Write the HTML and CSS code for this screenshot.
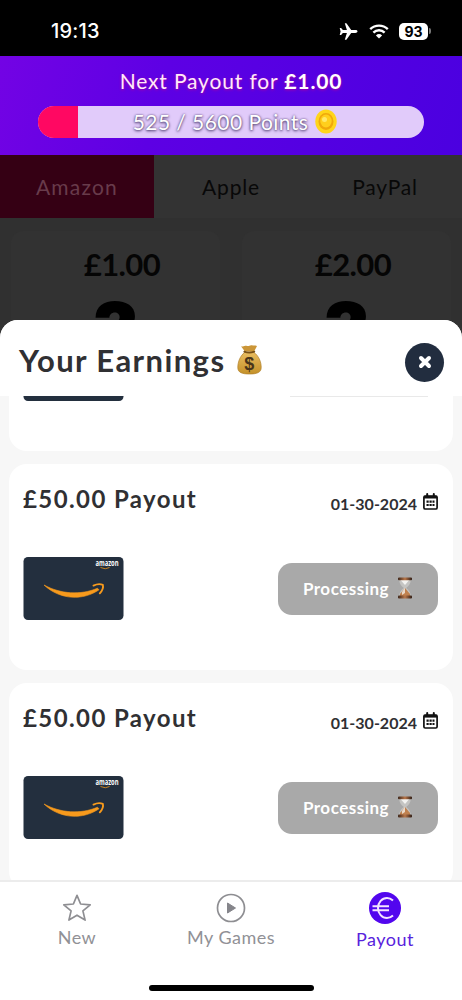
FILE: index.html
```html
<!DOCTYPE html>
<html lang="en">
<head>
<meta charset="utf-8">
<title>Your Earnings</title>
<link rel="stylesheet" href="styles.css">
</head>
<body>
<svg class="defs" aria-hidden="true">
  <defs>
    <linearGradient id="sand" x1="0" y1="0" x2="0" y2="1"><stop offset="0" stop-color="#e9bd62"/><stop offset="1" stop-color="#c49129"/></linearGradient>
    <linearGradient id="wood" x1="0" y1="0" x2="1" y2="0"><stop offset="0" stop-color="#3b2418"/><stop offset=".5" stop-color="#b9774a"/><stop offset="1" stop-color="#2e1b13"/></linearGradient>
    <symbol id="calendar" viewBox="0 0 15 17">
      <path d="M4.2 1v3M10.8 1v3" stroke="#111" stroke-width="2" stroke-linecap="round"/>
      <rect x=".9" y="3" width="13.2" height="13" rx="1.3" fill="#fff" stroke="#111" stroke-width="1.7"/>
      <path d="M1 4.2h13" stroke="#111" stroke-width="2.8"/>
      <path d="M3.5 8.7h8M3.5 12h8" stroke="#111" stroke-width="2.2" stroke-dasharray="2.2 .8"/>
    </symbol>
    <symbol id="hourglass" viewBox="0 0 16 22">
      <path d="M2.3 2.5h11.4c0 4.300-1.500 5.800-4.500 8.500 3 2.700 4.500 4.200 4.500 8.500H2.300c0-4.300 1.500-5.800 4.500-8.500-3-2.700-4.500-4.200-4.500-8.500z" fill="#c4c4c2"/>
      <path d="M3.500 3h8.800L8 8z" fill="#f3f3f1"/>
      <path d="M8 11 13 17v2.500H3V17z" fill="#c0814f"/>
      <path d="M8 10.500 5 15v3l3-2z" fill="#ead9c9"/>
      <rect x="1" y=".5" width="14" height="2.700" rx="1" fill="url(#wood)"/>
      <rect x="1" y="18.500" width="14" height="3" rx="1" fill="url(#wood)"/>
    </symbol>
    <symbol id="giftcard" viewBox="0 0 100 63">
      <rect width="100" height="63" rx="4.500" fill="#232f3e"/>
      <path d="M20.500 28C37 37 57 38.500 74 31.200l1.500 1.600C60 43.500 37 43.500 20.500 28z" fill="#f79a1c" stroke="#f79a1c" stroke-width=".6" stroke-linejoin="round"/>
      <path d="M70 28.600c3-1.500 7.300-1.600 9.300-.8.700 2.500-.8 6.200-3 8.500" fill="none" stroke="#f79a1c" stroke-width="1.900" stroke-linecap="round" stroke-linejoin="round"/>
      <text x="72" y="9" class="brand" textLength="23" lengthAdjust="spacingAndGlyphs">amazon</text>
      <path d="M77 10.500q5 2.500 9 0" fill="none" stroke="#c98522" stroke-width="1"/>
    </symbol>
  </defs>
</svg>

<header class="status">
  <span class="clock">19:13</span>
  <div class="signals">
    <svg width="19" height="17" viewBox="0 0 19 17"><path d="M18.500 8.500c0-.9-1-1.400-2.200-1.400h-4.100L7.600.6C7.400.3 7.100.2 6.800.2h-1l2.100 6.900H3.900L2.100 4.900H.7l.9 3.600-.9 3.600h1.400l1.800-2.200h4L5.800 16.800h1c.3 0 .6-.1.800-.4l4.600-6.500h4.100c1.200 0 2.200-.5 2.200-1.400z" fill="#fff"/></svg>
    <svg class="wifi" width="20" height="15" viewBox="0 0 20 15"><g fill="none" stroke="#fff" stroke-width="2.400"><path d="M1.200 5.200a12.600 12.600 0 0 1 17.600 0"/><path d="M4.400 8.600a8 8 0 0 1 11.200 0"/></g><path d="M10 14.600 6.900 11.500a4.500 4.500 0 0 1 6.200 0z" fill="#fff"/></svg>
    <span class="battery">93</span><i class="battery-tip"></i>
  </div>
</header>

<section class="goal">
  <div class="goal-title">Next Payout for <b>£1.00</b></div>
  <div class="bar">
    <div class="bar-fill" style="width:10.3%"></div>
    <div class="bar-label"><span>525 / 5600 Points</span>
      <svg width="22" height="25" viewBox="0 0 22 25"><ellipse cx="11" cy="12.500" rx="10.700" ry="12" fill="#ffd51a"/><ellipse cx="11" cy="12.500" rx="7.500" ry="8.500" fill="#f0a80b"/><ellipse cx="11" cy="12" rx="5.700" ry="6.500" fill="#ffcf1c"/><circle cx="9.500" cy="10.500" r="2.500" fill="#ffe869"/></svg>
    </div>
  </div>
</section>

<section class="shop">
  <nav class="tabs"><span class="tab on">Amazon</span><span class="tab">Apple</span><span class="tab">PayPal</span></nav>
  <div class="offers">
    <div class="offer"><div class="price">£1.00</div><div class="mark">?</div></div>
    <div class="offer"><div class="price">£2.00</div><div class="mark">?</div></div>
  </div>
</section>

<main class="sheet">
  <div class="sheet-head">
    <h1>Your Earnings</h1>
    <svg class="bag" width="25" height="31" viewBox="0 0 25 31">
      <path d="M7.500 7 4 2.200c3 .7 4-.9 6-.3 2 .5 3-1.200 5-.6 1.500.4 3-.2 5 .7L16.800 8z" fill="#cb9638"/>
      <path d="M8 8C3 12 .8 18 .8 23.500.8 28.500 5 30 12.500 30s11.700-1.500 11.700-6.500C24.200 18 22 12 16.500 8z" fill="url(#sand)" stroke="#b08029" stroke-width=".7"/>
      <path d="M7.300 7.600q5 2 10 0" stroke="#765018" stroke-width="1.800" fill="none" stroke-linecap="round"/>
      <text x="12.300" y="25.500" class="dollar">$</text>
    </svg>
    <button class="close" aria-label="Close"><svg width="14" height="14" viewBox="0 0 14 14"><path d="M3 3l8 8M11 3l-8 8" stroke="#fff" stroke-width="4" stroke-linecap="round"/></svg></button>
  </div>
  <div class="list">
    <article class="card first"><div class="clip"><svg width="101" height="63"><use href="#giftcard"/></svg></div><i class="trace"></i></article>
    <article class="card">
      <div class="row"><h2>£50.00 Payout</h2><div class="date"><span>01-30-2024</span><svg width="15" height="17"><use href="#calendar"/></svg></div></div>
      <div class="row body"><svg width="101" height="63"><use href="#giftcard"/></svg><div class="state"><span>Processing</span><svg width="16" height="22"><use href="#hourglass"/></svg></div></div>
    </article>
    <article class="card">
      <div class="row"><h2>£50.00 Payout</h2><div class="date"><span>01-30-2024</span><svg width="15" height="17"><use href="#calendar"/></svg></div></div>
      <div class="row body"><svg width="101" height="63"><use href="#giftcard"/></svg><div class="state"><span>Processing</span><svg width="16" height="22"><use href="#hourglass"/></svg></div></div>
    </article>
  </div>
</main>

<footer class="dock">
  <div class="dock-items">
    <div class="item"><svg width="30" height="30" viewBox="0 0 30 30"><path d="M15 2.300l3.600 8.700 9.600.8-7.300 6.100 2.200 9.200-8.100-4.900-8.100 4.900 2.200-9.200-7.300-6.100 9.600-.8z" fill="none" stroke="#8e8e92" stroke-width="1.700" stroke-linejoin="round"/></svg><span>New</span></div>
    <div class="item"><svg width="30" height="30" viewBox="0 0 30 30"><circle cx="15" cy="15" r="13.500" fill="none" stroke="#8e8e92" stroke-width="1.700"/><path d="M11.500 10v10l8-5z" fill="#85858b" stroke="#85858b" stroke-linejoin="round"/></svg><span>My Games</span></div>
    <div class="item active"><svg width="34" height="34" viewBox="0 0 34 34"><circle cx="17" cy="17" r="16" fill="#5206ee"/><path d="M25 9.500c-2-1.800-4-2.500-6-2.500-5 0-9 4.300-9 10s4 10 9 10c2 0 4-.7 6-2.500M4.500 15.300H21M4.500 19.300H21" fill="none" stroke="#f4e4ff" stroke-width="2"/></svg><span>Payout</span></div>
  </div>
  <div class="home"></div>
</footer>
</body>
</html>
```
FILE: styles.css
```css
* { box-sizing: border-box; }
body {
  margin: 0;
  width: 462px;
  height: 1000px;
  overflow: hidden;
  display: flex;
  flex-direction: column;
  background: #333;
  color: #303033;
  font-family: Lato, "Open Sans", sans-serif;
  white-space: nowrap;
}
svg { display: block; flex: none; }
.defs { position: absolute; width: 0; height: 0; }
h1, h2 { margin: 0; font-weight: 700; }

.status {
  height: 56px;
  flex: none;
  background: #000;
  color: #fff;
  display: flex;
  justify-content: space-between;
  padding: 19px 31px 0 51px;
}
.clock { font: 500 20px/24px Inter, sans-serif; letter-spacing: .2px; }
.signals { display: flex; align-items: center; height: 24px; }
.wifi { margin: 0 10px 0 11px; }
.battery {
  width: 29px;
  height: 17px;
  border-radius: 5px;
  background: #fff;
  color: #000;
  font: 700 14px/17px Inter, sans-serif;
  text-align: center;
}
.battery-tip { width: 2px; height: 6px; margin-left: 1px; border-radius: 0 2px 2px 0; background: #777; }

.goal {
  height: 99px;
  flex: none;
  padding: 12px 38px 0;
  background: linear-gradient(105deg, #7303e4 0%, #5d00e4 35%, #4b00e0 100%);
  color: #fff;
}
.goal-title {
  height: 26px;
  font-size: 21px;
  line-height: 26px;
  letter-spacing: .85px;
  text-align: center;
  color: #ffe9fa;
  text-shadow: 0 1px 3px #b000a0;
}
.goal-title b { color: #fff; }
.bar {
  display: grid;
  height: 32px;
  margin-top: 12px;
  border-radius: 16px;
  overflow: hidden;
  background: #e1cbfa;
}
.bar-fill, .bar-label { grid-area: 1 / 1; }
.bar-fill { background: #ff0862; }
.bar-label {
  display: flex;
  justify-content: center;
  align-items: center;
  gap: 7px;
  padding: 0 0 1px 8px;
  font-size: 21px;
  letter-spacing: .45px;
  text-shadow: 0 1px 3px #453465, 0 0 2px #745f96;
}

.shop { height: 165px; flex: none; overflow: hidden; background: #303030; }
.tabs { display: grid; grid-template-columns: repeat(3, 1fr); height: 63px; background: #333; }
.tab { height: 63px; padding-top: 1px; font-size: 21px; line-height: 62px; text-align: center; color: #080808; letter-spacing: .8px; }
.tab.on { background: #350014; color: #683b4b; letter-spacing: 1.2px; }
.offers { display: flex; gap: 22px; padding: 13px 11px 0; }
.offer { flex: 1; height: 180px; border-radius: 12px; background: #323232; color: #050505; text-align: center; }
.price { height: 60px; padding-left: 13px; font-size: 31px; line-height: 66px; font-weight: 700; letter-spacing: -.6px; }
.mark { font: 900 76px/76px Inter, sans-serif; color: #000; }

.sheet {
  height: 560px;
  flex: none;
  display: flex;
  flex-direction: column;
  border-radius: 18px 18px 0 0;
  overflow: hidden;
  background: #f7f7f7;
}
.sheet-head { height: 76px; flex: none; display: flex; align-items: center; padding: 8px 18px 0 19px; background: #fff; }
h1 { padding-bottom: 4px; font-size: 31px; line-height: 40px; letter-spacing: 1.4px; }
.bag { margin: 0 0 5px 12px; }
.close {
  width: 39px;
  height: 39px;
  margin-left: auto;
  padding: 0;
  border: 0;
  border-radius: 50%;
  display: grid;
  place-items: center;
  background: #222d3f;
}
.list { display: flex; flex-direction: column; gap: 13px; padding: 0 9px; }
.card { height: 206px; flex: none; padding: 21px 15px 0 14px; border-radius: 18px; background: #fff; }
.card.first { display: flex; justify-content: space-between; height: 55px; padding-top: 0; border-radius: 0 0 18px 18px; }
.clip { display: flex; align-items: flex-end; height: 5px; overflow: hidden; }
.trace { width: 138px; height: 1px; margin-right: 10px; background: #e9e9e9; }
.row { display: flex; justify-content: space-between; }
h2 { height: 28px; font-size: 24px; line-height: 28px; letter-spacing: 1.4px; }
.date { display: flex; gap: 6px; padding-top: 8px; font-size: 16px; font-weight: 700; line-height: 22px; }
.body { align-items: center; height: 63px; margin-top: 42px; }
.state {
  width: 160px;
  height: 52px;
  border-radius: 14px;
  display: flex;
  align-items: center;
  justify-content: center;
  gap: 8px;
  padding-bottom: 1px;
  background: #a9a9a9;
  color: #fff;
  font-size: 17px;
  font-weight: 700;
  letter-spacing: .5px;
}
.brand { font: 700 8px "Open Sans", sans-serif; fill: #fff; }
.dollar { font: 700 18px "Liberation Sans", sans-serif; fill: #49351a; text-anchor: middle; }

.dock { height: 120px; flex: none; border-top: 2px solid #ececec; background: #fff; }
.dock-items { display: grid; grid-template-columns: repeat(3, 1fr); height: 103px; }
.item { display: flex; flex-direction: column; align-items: center; padding-top: 11px; color: #919196; font-size: 18px; line-height: 24px; letter-spacing: .5px; }
.item span { margin-top: 2px; }
.item.active { padding-top: 9px; color: #5822dc; }
.home { width: 165px; height: 6px; margin: 0 auto; border-radius: 3px; background: #000; }
```
